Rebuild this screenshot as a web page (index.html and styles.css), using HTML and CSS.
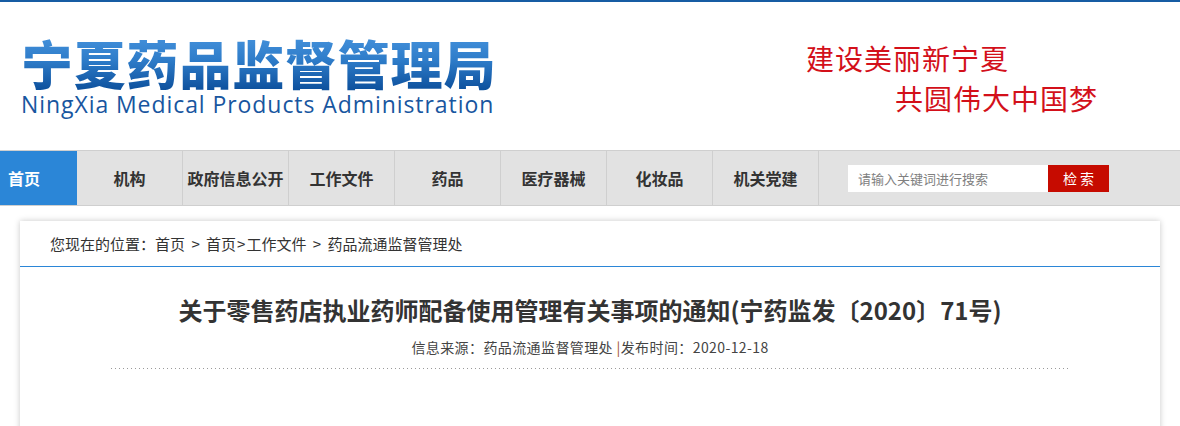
FILE: index.html
```html
<!DOCTYPE html>
<html lang="zh-CN">
<head>
<meta charset="utf-8">
<title>宁夏药品监督管理局</title>
<link rel="stylesheet" href="styles.css">
</head>
<body>
<header class="header">
  <div class="logo">
    <div class="logo-cn">宁夏药品监督管理局</div>
    <div class="logo-en">NingXia Medical Products Administration</div>
  </div>
  <div class="slogan">
    <div class="slogan-1">建设美丽新宁夏</div>
    <div class="slogan-2">共圆伟大中国梦</div>
  </div>
</header>
<nav class="nav">
  <a class="nav-item nav-home" href="#">首页</a>
  <a class="nav-item" href="#">机构</a>
  <a class="nav-item" href="#">政府信息公开</a>
  <a class="nav-item" href="#">工作文件</a>
  <a class="nav-item" href="#">药品</a>
  <a class="nav-item" href="#">医疗器械</a>
  <a class="nav-item" href="#">化妆品</a>
  <a class="nav-item" href="#">机关党建</a>
  <form class="search">
    <input class="search-input" type="text" placeholder="请输入关键词进行搜索">
    <button class="search-btn" type="button">检 索</button>
  </form>
</nav>
<main class="card">
  <div class="crumb">您现在的位置：首页 <span class="gt">&gt;</span> 首页<span class="gt-tight">&gt;</span>工作文件 <span class="gt">&gt;</span> 药品流通监督管理处</div>
  <div class="article">
    <h1 class="title">关于零售药店执业药师配备使用管理有关事项的通知(宁药监发〔2020〕71号)</h1>
    <div class="meta">信息来源：药品流通监督管理处 <span class="sep">|</span>发布时间：2020-12-18</div>
    <div class="dots"></div>
  </div>
</main>
</body>
</html>
```
FILE: styles.css
```css
* { box-sizing: border-box; }
html, body { margin: 0; padding: 0; }
body {
  background: #fff;
  font-family: "Noto Sans CJK SC", "Noto Sans", sans-serif;
  color: #333;
}
.header {
  height: 150px;
  border-top: 2px solid #165ca3;
  display: flex;
  justify-content: space-between;
}
.logo {
  padding: 33px 0 0 21px;
  display: flex;
  flex-direction: column;
}
.logo-cn {
  font-size: 52px;
  line-height: 56px;
  font-weight: 900;
  letter-spacing: 0.8px;
  background: linear-gradient(to bottom, #4592dc 0%, #2e7cc9 45%, #0c4f9b 100%);
  -webkit-background-clip: text;
  background-clip: text;
  color: transparent;
}
.logo-en {
  font-family: "Open Sans", "Noto Sans", sans-serif;
  font-size: 23px;
  line-height: 26px;
  color: #18569f;
  letter-spacing: 0.93px;
}
.slogan {
  padding: 36px 82px 0 0;
  color: #d3101a;
  font-size: 28px;
  line-height: 40px;
  letter-spacing: 1px;
}
.slogan-2 { padding-left: 89px; }
.nav {
  height: 56px;
  background: #e2e2e2;
  border-top: 1px solid #cfcfcf;
  border-bottom: 1px solid #cfcfcf;
  display: flex;
  align-items: stretch;
}
.nav-item {
  width: 106px;
  border-right: 1px solid #cfcfcf;
  display: flex;
  align-items: center;
  justify-content: center;
  font-size: 16px;
  font-weight: 700;
  color: #333;
  text-decoration: none;
}
.nav-home {
  width: 77px;
  border-right: none;
  justify-content: flex-start;
  padding-left: 8px;
  background: #2b86d7;
  color: #fff;
}
.search {
  margin: 0 0 0 29px;
  display: flex;
  align-items: center;
}
.search-input {
  width: 200px;
  height: 27px;
  border: none;
  outline: none;
  padding: 0 10px;
  font-family: "Noto Sans CJK SC", sans-serif;
  font-size: 13px;
  color: #333;
  background: #fff;
}
.search-input::placeholder { color: #808080; }
.search-btn {
  width: 61px;
  height: 27px;
  border: none;
  background: #c60b00;
  color: #fff;
  font-family: "Noto Sans CJK SC", sans-serif;
  font-size: 14px;
  padding: 0;
}
.card {
  width: 1140px;
  margin: 15px auto 0;
  background: #fff;
  box-shadow: 0 0 6px rgba(0, 0, 0, 0.22);
  min-height: 260px;
}
.crumb {
  height: 46px;
  padding: 13px 0 0 30px;
  font-size: 15px;
  line-height: 20px;
  color: #333;
  border-bottom: 1px solid #2b86d7;
}
.gt { margin: 0 3px; }
.gt-tight { margin: 0 1px; }
.article {
  margin: 0 91px;
  padding-top: 25px;
  text-align: center;
}
.title {
  margin: 0;
  font-size: 24px;
  line-height: 36px;
  font-weight: 700;
  color: #333;
}
.meta {
  margin-top: 7px;
  font-size: 14px;
  line-height: 24px;
  color: #444;
  letter-spacing: 0.4px;
}
.sep { color: #a0522d; }
.dots {
  height: 1px;
  margin-top: 9px;
  background-image: repeating-linear-gradient(to right, #9a9a9a 0, #9a9a9a 1px, transparent 1px, transparent 4px);
}
```
